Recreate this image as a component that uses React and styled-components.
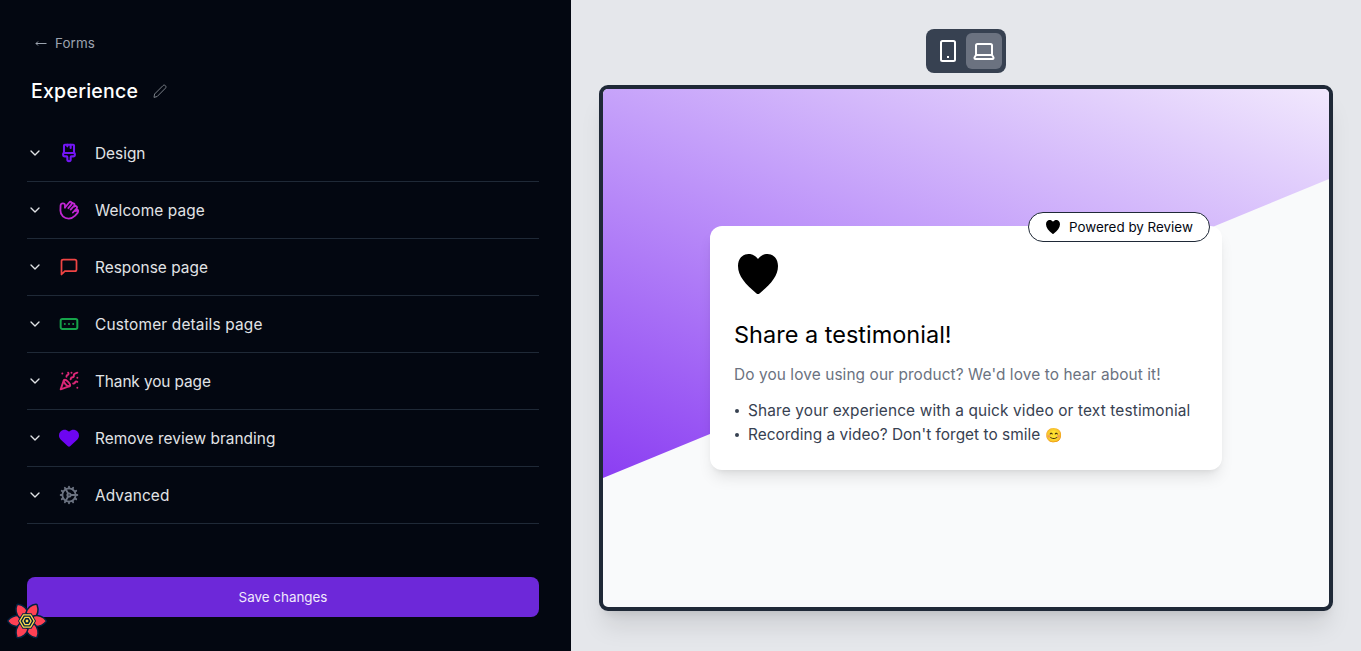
import React from "react";
import styled, { createGlobalStyle } from "styled-components";
import { LuPaintbrushVertical, LuMessageSquare, LuRectangleEllipsis, LuPartyPopper, LuCog, LuChevronDown } from "react-icons/lu";
import { FaHeart } from "react-icons/fa6";

const GlobalStyle = createGlobalStyle`
  * { box-sizing: border-box; }
  body { margin: 0; overflow: hidden; font-family: Inter, "Open Sans", sans-serif; }
  h1, h2, p, ul { margin: 0; padding: 0; font-weight: 400; }
  button { border: 0; padding: 0; background: none; font: inherit; color: inherit; }
  svg { display: block; flex: none; }
`;

const Page = styled.main`
  display: grid;
  grid-template-columns: 571px 1fr;
  height: 100vh;
  min-height: 651px;
`;

const Sidebar = styled.aside`
  display: flex;
  flex-direction: column;
  padding: 33px 32px 0 27px;
  background: #030711;
  color: #e1e3e6;
`;

const BackLink = styled.a`
  display: flex;
  align-items: center;
  gap: 7px;
  height: 20px;
  padding-left: 7px;
  color: #9ca3af;
  font-size: 13.4px;
  font-weight: 370;
  letter-spacing: 0.1px;
`;

const TitleRow = styled.div`
  display: flex;
  align-items: center;
  gap: 15px;
  height: 28px;
  margin-top: 24px;
  padding-left: 4px;
  color: #7b8088;
`;

const Title = styled.h1`
  width: 107px;
  white-space: nowrap;
  color: #fff;
  font-size: 19.5px;
  font-weight: 500;
  letter-spacing: 0.25px;
`;

const Sections = styled.div`
  display: flex;
  flex-direction: column;
  margin-top: 20px;
`;

const SectionRow = styled.button`
  display: flex;
  align-items: center;
  height: 57px;
  padding-bottom: 1px;
  border-bottom: 1px solid #1f2937;
  text-align: left;
`;

const IconSlot = styled.span`
  display: flex;
  justify-content: center;
  width: 20px;
  margin: 0 16px;
  color: ${(p) => p.$color};
`;

const SectionLabel = styled.span`
  padding-top: 2px;
  font-size: 15.4px;
  font-weight: 370;
  letter-spacing: ${(p) => p.$track || 0}px;
`;

const SaveButton = styled.button`
  height: 40px;
  margin-top: 53px;
  padding-bottom: 1px;
  border-radius: 8px;
  background: #6d28d9;
  color: #f1eafc;
  font-size: 13.4px;
  font-weight: 370;
`;

const DevtoolsBadge = styled.div`
  position: absolute;
  left: 7px;
  top: 601px;
`;

const Stage = styled.section`
  display: flex;
  flex-direction: column;
  align-items: center;
  padding-top: 29px;
  background: #e5e7eb;
`;

const DeviceSwitch = styled.div`
  display: flex;
  padding: 4px;
  border-radius: 8px;
  background: #374151;
`;

const DeviceButton = styled.button`
  display: grid;
  place-items: center;
  width: 36px;
  height: 36px;
  border-radius: 6px;
  background: ${(p) => (p.$active ? "#6b7280" : "transparent")};
  color: #fff;
`;

const Frame = styled.div`
  display: grid;
  width: 734px;
  height: 526px;
  margin-top: 12px;
  border: 4px solid #1f2937;
  border-radius: 9px;
  background: #f9fafb;
  box-shadow: 0 20px 25px -5px rgba(0, 0, 0, 0.1), 0 8px 10px -6px rgba(0, 0, 0, 0.1);
  overflow: hidden;
`;

const Backdrop = styled.div`
  grid-area: 1 / 1;
  height: 389px;
  background: linear-gradient(21deg, #8b3ef2 0%, #c49ffa 56%, #f1e8fd 100%);
  clip-path: polygon(0 0, 100% 0, 100% 90px, 0 100%);
`;

const Card = styled.article`
  grid-area: 1 / 1;
  position: relative;
  place-self: start center;
  width: 512px;
  height: 244px;
  margin-top: 137px;
  padding: 24px;
  border-radius: 12px;
  background: #fff;
  box-shadow: 0 10px 15px -3px rgba(0, 0, 0, 0.1), 0 4px 6px -4px rgba(0, 0, 0, 0.1);
`;

const PoweredBy = styled.div`
  position: absolute;
  top: -14px;
  right: 12px;
  display: flex;
  align-items: center;
  gap: 9px;
  width: 182px;
  height: 30px;
  padding-left: 17px;
  border: 1px solid #1f2937;
  border-radius: 15px;
  background: #fff;
  color: #030712;
  font-size: 13.4px;
  white-space: nowrap;
`;

const LogoBox = styled.div`
  display: grid;
  place-items: center;
  width: 48px;
  height: 48px;
`;

const Heading = styled.h2`
  margin-top: 21px;
  color: #000;
  font-size: 23.5px;
  line-height: 32px;
  white-space: nowrap;
`;

const Lead = styled.p`
  margin-top: 12px;
  color: #6b7280;
  font-size: 15.4px;
  line-height: 24px;
  letter-spacing: 0.1px;
  white-space: nowrap;
`;

const Bullets = styled.ul`
  margin-top: 12px;
  list-style: none;
  color: #374151;
  font-size: 15.4px;
  line-height: 24px;
`;

const Bullet = styled.li`
  display: flex;
  align-items: center;
  height: 24px;
  white-space: pre;
  letter-spacing: ${(p) => p.$track || 0}px;
  &::before {
    content: "";
    flex: none;
    width: 4px;
    height: 4px;
    margin: 0 9px 0 1px;
    border-radius: 50%;
    background: currentColor;
  }
`;

const Emoji = styled.span`
  font-size: 14px;
  letter-spacing: 0;
`;

const HandIcon = () => (
  <svg width="20" height="20" viewBox="0 0 24 24" fill="none" stroke="currentColor" strokeWidth="2.200" strokeLinecap="round" strokeLinejoin="round">
    <path d="M7.200 9V6.200C7.200 3.400 2.200 3.400 1.900 6.600L1.700 12.500c0 6 4.600 9.800 10 9.800 3.500 0 5.500-1.400 7.600-3.500l2.500-2.700c1.600-1.800-.3-4.200-2.300-3" />
    <path d="M7.200 9l5-6c1.700-1.900 4.300.2 2.800 2.200l-3.800 4.600M15 4.600c1.900-2 4.700.2 3.100 2.300L14 11.500M18.300 7.800c2-1.600 4.300.6 2.700 2.500l-4.300 4.700M20.500 11.500c1.800-.8 3.200 1.200 2 2.800" />
  </svg>
);

const HeartMark = ({ size }) => (
  <svg width={size} height={size} viewBox="0 0 40 40" fill="#000">
    <path d="M20 5C17.500 1.500 14 0 10.500 0 4.500 0 0 4.800 0 12c0 10 7.500 18.500 18.500 27.400q1.500 1.200 3 0C32.500 30.500 40 22 40 12 40 4.800 35.500 0 29.500 0 26 0 22.500 1.500 20 5Z" />
  </svg>
);

const BackArrow = () => (
  <svg width="14" height="14" viewBox="0 0 14 14" fill="none" stroke="currentColor" strokeWidth="1" strokeLinejoin="round">
    <path d="M12.500 7.500H2M4 5.500 2 7.500l2 2" />
  </svg>
);

const PencilIcon = () => (
  <svg width="14" height="14" viewBox="0 0 14 14" fill="none" stroke="currentColor" strokeWidth="1" strokeLinejoin="round">
    <path d="M1 13.400l.6-3.400 8.400-8.400c1.600-1.500 4 .9 2.500 2.500L4.200 12.500z" />
  </svg>
);

const TabletIcon = () => (
  <svg width="24" height="24" viewBox="0 0 24 24" fill="none" stroke="currentColor" strokeWidth="2" strokeLinejoin="round">
    <rect x="5" y="2" width="14" height="20" rx="1.500" />
    <path d="M11 18h2" />
  </svg>
);

const LaptopIcon = () => (
  <svg width="24" height="24" viewBox="0 0 24 24" fill="none" stroke="currentColor" strokeWidth="2" strokeLinejoin="round">
    <path d="M4 16V6.500Q4 5 5.500 5H18.500Q20 5 20 6.500V16M4 16H20L21.500 18.500Q21.700 20 20.500 20H3.500Q2.300 20 2.500 18.500Z" />
  </svg>
);

const FlowerIcon = () => (
  <svg width="40" height="40" viewBox="-20 -20 40 40">
    {[0, 60, 120, 180, 240, 300].map((angle) => (
      <path key={angle} transform={`rotate(${angle})`} d="M-6.500 5C-11 6.300-16.500 4.500-19 .6Q-19.400 0-19-.7C-15.500-5-9.500-6.200-4.500-5Z" fill="#ff4154" stroke="#00233f" strokeWidth="1.500" strokeLinejoin="round" />
    ))}
    <path d="M-4.500-7.800H4.500L9 0 4.500 7.800H-4.500L-9 0Z" fill="#00233f" />
    <g fill="none" stroke="#ffd94c" strokeWidth="1.300">
      <path d="M-3.600-6.200H3.600L7.200 0 3.600 6.200H-3.600L-7.200 0Z" />
      <path d="M-2-3.600H2L4.100 0 2 3.600H-2L-4.100 0Z" />
    </g>
    <circle r="1.400" fill="#ffd94c" />
  </svg>
);

const sections = [
  { label: "Design", color: "#7316f5", track: 0, icon: <LuPaintbrushVertical size={20} strokeWidth={2.5} /> },
  { label: "Welcome page", color: "#c026d3", track: 0.11, icon: <HandIcon /> },
  { label: "Response page", color: "#ef4444", track: 0.03, icon: <LuMessageSquare size={20} strokeWidth={2.1} /> },
  { label: "Customer details page", color: "#16a34a", track: 0.18, icon: <LuRectangleEllipsis size={20} strokeWidth={2.4} /> },
  { label: "Thank you page", color: "#db2777", track: -0.1, icon: <LuPartyPopper size={20} strokeWidth={2.3} /> },
  { label: "Remove review branding", color: "#6d05f2", track: 0.04, icon: <FaHeart size={20} /> },
  { label: "Advanced", color: "#6b7280", track: 0.1, icon: <LuCog size={20} strokeWidth={2.2} /> },
];

export default function App() {
  return (
    <Page>
      <GlobalStyle />
      <Sidebar>
        <BackLink><BackArrow />Forms</BackLink>
        <TitleRow><Title>Experience</Title><PencilIcon /></TitleRow>
        <Sections>
          {sections.map((s) => (
            <SectionRow key={s.label}>
              <LuChevronDown size={16} />
              <IconSlot $color={s.color}>{s.icon}</IconSlot>
              <SectionLabel $track={s.track}>{s.label}</SectionLabel>
            </SectionRow>
          ))}
        </Sections>
        <SaveButton>Save changes</SaveButton>
      </Sidebar>
      <Stage>
        <DeviceSwitch>
          <DeviceButton aria-label="Tablet"><TabletIcon /></DeviceButton>
          <DeviceButton aria-label="Laptop" $active><LaptopIcon /></DeviceButton>
        </DeviceSwitch>
        <Frame>
          <Backdrop />
          <Card>
            <PoweredBy><HeartMark size={14} />Powered by Review</PoweredBy>
            <LogoBox><HeartMark size={40} /></LogoBox>
            <Heading>Share a testimonial!</Heading>
            <Lead>Do you love using our product? We'd love to hear about it!</Lead>
            <Bullets>
              <Bullet $track={0.14}>Share your experience with a quick video or text testimonial</Bullet>
              <Bullet $track={0.03}>Recording a video? Don't forget to smile <Emoji>😊</Emoji></Bullet>
            </Bullets>
          </Card>
        </Frame>
      </Stage>
      <DevtoolsBadge><FlowerIcon /></DevtoolsBadge>
    </Page>
  );
}
